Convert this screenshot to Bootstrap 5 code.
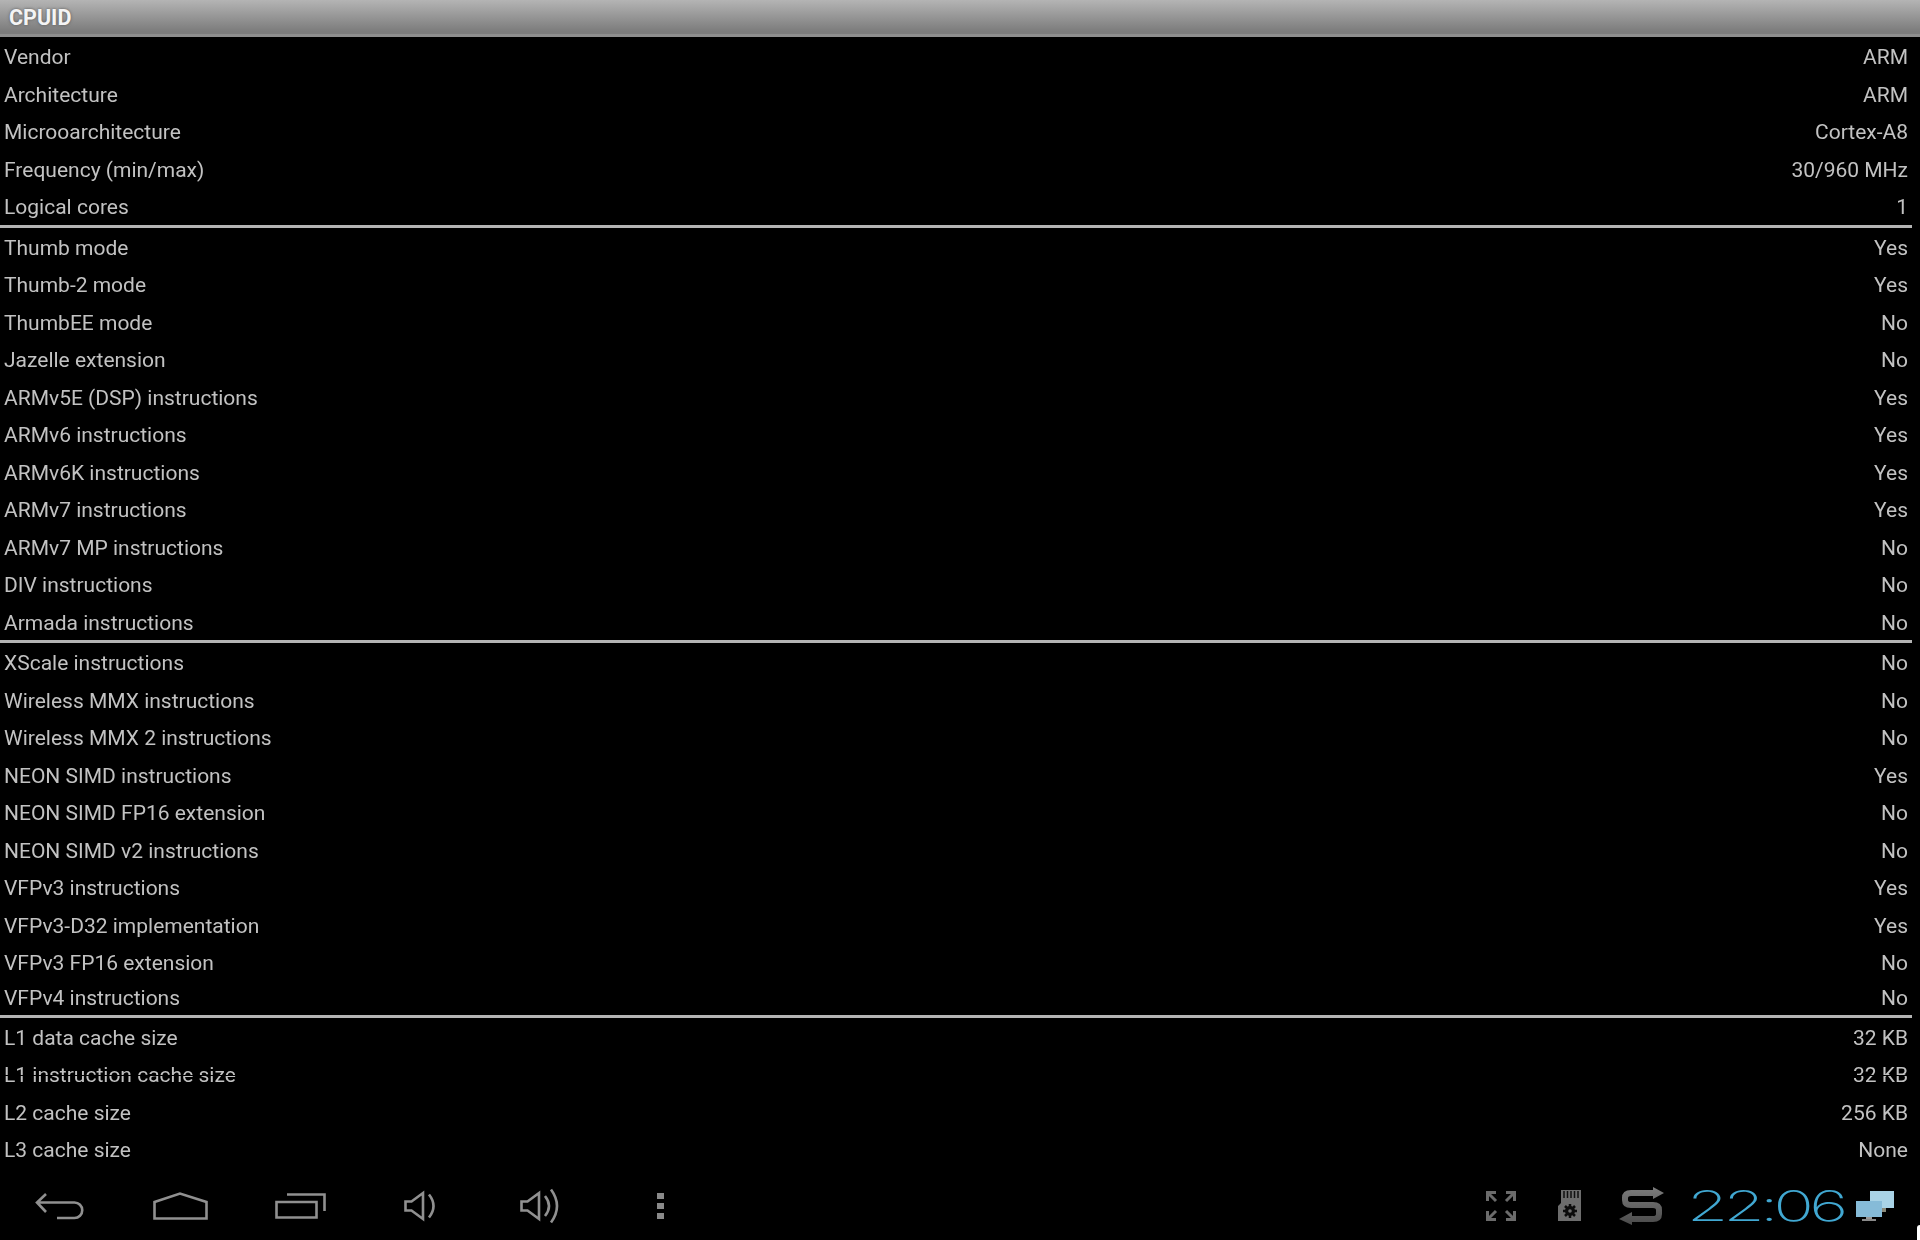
<!DOCTYPE html>
<html lang="en">

<head>
    <meta charset="UTF-8">
    <title>CPUID</title>
    <link rel="stylesheet" href="https://cdn.jsdelivr.net/npm/bootstrap@5.3.0/dist/css/bootstrap.min.css">
    <style>
        html, body { background: #000; }
        body { height: 1240px; overflow: hidden; font-family: Roboto, "Liberation Sans", sans-serif; }
        .app-title { height: 37px; padding: 0 9px; font-size: 21.5px; font-weight: 700; line-height: 36px; color: #f4f4f4; text-shadow: 0 0 3px #555; background: linear-gradient(#b4b4b4, #7c7c7c 92%); border-bottom: 3px solid #8e8e8e; }
        .info-list { filter: blur(.45px); }
        .info-group { width: 1912px; border-bottom: 3px solid #b4b4b4; }
        .info-group:last-child { border-bottom: 0; }
        .info-row { height: 37.5px; padding: 2px 4px 0 4px; font-size: 21px; line-height: 37px; color: #c2c2c2; }
        .info-row.is-short { height: 34px; padding-top: 1px; line-height: 33px; }
        .info-row.is-torn::after { content: ""; position: absolute; left: 0; right: 0; top: 20px; height: 1px; background: #000; }
        .sys-bar { height: 72px; padding-top: 4px; filter: blur(.5px); }
        .nav-slot { width: 120px; }
        .nav-ico { fill: none; stroke: #909090; stroke-width: 2.6; }
        .tray { padding-right: 26px; }
        .tray-sd { margin-left: 42px; }
        .tray-sync { margin-left: 38px; }
        .clock-box { width: 160px; margin-left: 23px; margin-right: 9px; }
        .clock-text { font-family: Inter, sans-serif; font-weight: 250; font-size: 42px; line-height: 1; letter-spacing: -3px; color: #41a8d2; transform-origin: left center; transform: scaleX(1.59); white-space: nowrap; }
        .corner-bit { width: 3px; height: 15px; background: #fff; border-top-left-radius: 3px; }
    </style>
</head>

<body class="position-relative">
    <div class="app-title">CPUID</div>

    <div id="infoList" class="info-list"></div>

    <!-- Android system bar -->
    <div class="sys-bar d-flex align-items-center">
        <div class="nav-slot d-flex justify-content-center">
            <svg class="nav-ico" width="50" height="28" viewBox="0 0 50 28"><path d="M11 2 2 10.500 11 20M2 10.500h37.500a7.500 7.500 0 0 1 0 15.500H22"/></svg>
        </div>
        <div class="nav-slot d-flex justify-content-center">
            <svg class="nav-ico" width="55" height="28" viewBox="0 0 55 28"><path d="M1.500 10 27 1.500 53.500 10v16.500h-52z"/></svg>
        </div>
        <div class="nav-slot d-flex justify-content-center">
            <svg class="nav-ico" width="51" height="26" viewBox="0 0 51 26"><path d="M1.500 9h40v15.500h-40zM12 1.500h37.500V18"/></svg>
        </div>
        <div class="nav-slot d-flex justify-content-center">
            <svg class="nav-ico" width="33" height="32" viewBox="0 0 33 32"><path d="M1.500 11.500h6L19 3v26L7.500 20.500h-6zM25 4.500q9 11.500 0 23"/></svg>
        </div>
        <div class="nav-slot d-flex justify-content-center">
            <svg class="nav-ico" width="41" height="36" viewBox="0 0 41 36"><path d="M1.500 13.500h6L19 5v26l-11.500-8.500h-6zM25 8q8 10 0 20M31 1.500q12 16.500 0 33"/></svg>
        </div>
        <div class="nav-slot d-flex justify-content-center">
            <svg width="7" height="26" viewBox="0 0 7 26" fill="#8a8a8a"><rect y="0" width="7" height="6"/><rect y="10" width="7" height="6"/><rect y="20" width="7" height="6"/></svg>
        </div>

        <div class="tray ms-auto d-flex align-items-center">
            <svg width="30" height="30" viewBox="0 0 30 30" fill="none" stroke="#6b6b6b" stroke-width="3"><path d="M1.500 10V1.500H10M2 2l8 8M20 1.500h8.500V10M28 2l-8 8M1.500 20v8.500H10M2 28l8-8M28.500 20v8.500H20M28 28l-8-8"/></svg>
            <svg class="tray-sd" width="23" height="31" viewBox="0 0 23 31"><path fill="#6d6d6d" d="M3 0h20v31H0V16l3-3z"/><path stroke="#111" stroke-width="1.500" d="M6 1v7M9.500 1v7M13 1v7M16.500 1v7M20 1v7"/><circle cx="12" cy="21" r="3.500" fill="none" stroke="#0c0c0c" stroke-width="3"/><path stroke="#0c0c0c" stroke-width="2.500" d="M12 14v14M5 21h14M7 16l10 10M17 16 7 26"/><circle cx="12" cy="21" r="1.800" fill="#6d6d6d"/></svg>
            <svg class="tray-sync" width="45" height="38" viewBox="0 0 45 38">
                <defs><linearGradient id="syncFill" gradientUnits="userSpaceOnUse" x1="0" y1="0" x2="0" y2="38"><stop offset="0" stop-color="#7c7c7c"/><stop offset="1" stop-color="#4a4a4a"/></linearGradient></defs>
                <path fill="none" stroke="url(#syncFill)" stroke-width="6" d="M35 6H12Q6 6 6 11v2q0 5 6 5h22q6 0 6 5v4q0 5-6 5H12"/>
                <path fill="url(#syncFill)" d="M34 0l11 6-11 6zM13 25v13L0 32z"/>
            </svg>
            <div class="clock-box"><div class="clock-text">22:06</div></div>
            <svg width="38" height="31" viewBox="0 0 38 31"><rect x="14" y="1" width="24" height="17" fill="#a9d3e6"/><rect x="22" y="18" width="8" height="4" fill="#8a8a7a"/><rect x="0" y="11" width="26" height="16" fill="#86bbd8"/><rect x="10" y="27" width="6" height="2" fill="#9a9a9a"/><rect x="6" y="29" width="14" height="2" fill="#8a8a8a"/></svg>
        </div>
    </div>

    <div class="corner-bit position-absolute bottom-0 end-0"></div>

    <script>
        const groups = [
            [["Vendor", "ARM"], ["Architecture", "ARM"], ["Microoarchitecture", "Cortex-A8"], ["Frequency (min/max)", "30/960 MHz"], ["Logical cores", "1"]],
            [["Thumb mode", "Yes"], ["Thumb-2 mode", "Yes"], ["ThumbEE mode", "No"], ["Jazelle extension", "No"], ["ARMv5E (DSP) instructions", "Yes"], ["ARMv6 instructions", "Yes"], ["ARMv6K instructions", "Yes"], ["ARMv7 instructions", "Yes"], ["ARMv7 MP instructions", "No"], ["DIV instructions", "No"], ["Armada instructions", "No"]],
            [["XScale instructions", "No"], ["Wireless MMX instructions", "No"], ["Wireless MMX 2 instructions", "No"], ["NEON SIMD instructions", "Yes"], ["NEON SIMD FP16 extension", "No"], ["NEON SIMD v2 instructions", "No"], ["VFPv3 instructions", "Yes"], ["VFPv3-D32 implementation", "Yes"], ["VFPv3 FP16 extension", "No"], ["VFPv4 instructions", "No", "is-short"]],
            [["L1 data cache size", "32 KB"], ["L1 instruction cache size", "32 KB", "is-torn"], ["L2 cache size", "256 KB"], ["L3 cache size", "None"]]
        ];

        // Render the CPU feature rows
        document.getElementById('infoList').innerHTML = groups.map(group => `
            <div class="info-group">
                ${group.map(([name, value, extra = ""]) => `
                    <div class="info-row position-relative d-flex justify-content-between ${extra}">
                        <span>${name}</span><span>${value}</span>
                    </div>
                `).join("")}
            </div>
        `).join("");
    </script>
    <script src="https://cdn.jsdelivr.net/npm/bootstrap@5.3.0/dist/js/bootstrap.bundle.min.js"></script>
</body>

</html>
